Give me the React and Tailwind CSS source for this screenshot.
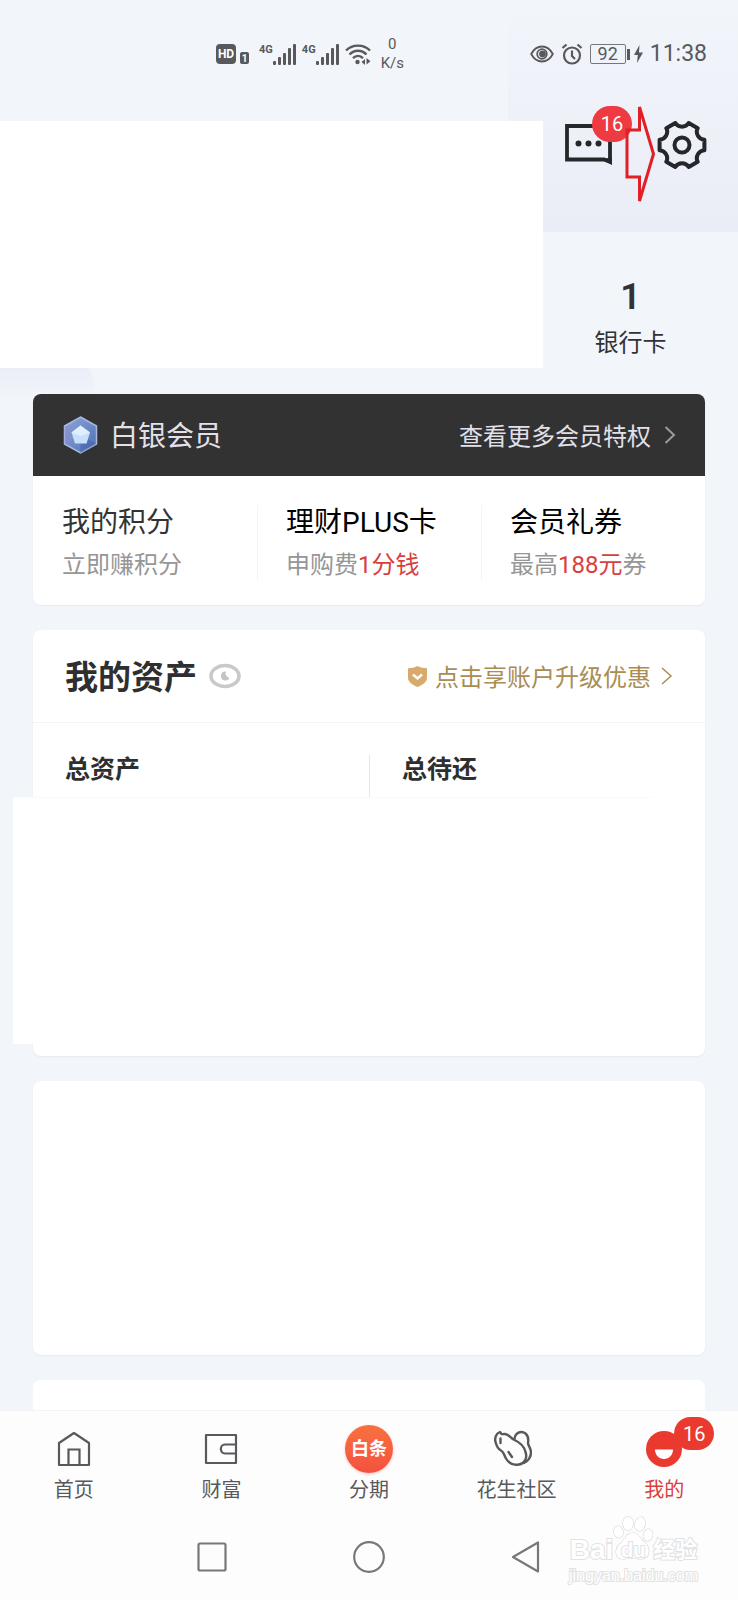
import React from 'react';

const benefits = [
  {
    id: 'points',
    title: '我的积分',
    titleClass: 'text-[#333]',
    note: <>立即赚积分</>,
    border: 'border-transparent'
  },
  {
    id: 'plus',
    title: '理财PLUS卡',
    titleClass: 'text-black',
    note: <>申购费<span className="text-[#d8403c]">1分钱</span></>,
    border: 'border-gray-100'
  },
  {
    id: 'coupon',
    title: '会员礼券',
    titleClass: 'text-black',
    note: <>最高<span className="text-[#d8403c]">188元</span>券</>,
    border: 'border-gray-100'
  }
];

const SignalBars = () => (
  <svg width="23" height="21" viewBox="0 0 23 21" fill="#58595c" aria-hidden="true">
    <rect x="0" y="17" width="3" height="4" rx="1" />
    <rect x="5" y="13" width="3" height="8" rx="1" />
    <rect x="10" y="9" width="3" height="12" rx="1" />
    <rect x="15" y="4" width="3" height="17" rx="1" />
    <rect x="20" y="0" width="3" height="21" rx="1" />
  </svg>
);

const Signal = () => (
  <div className="flex items-start">
    <span className="text-[11px] leading-3 font-bold">4G</span>
    <SignalBars />
  </div>
);

const StatusBar = () => (
  <div className="flex h-[108px] items-center justify-between pl-[29%] pr-[31px] text-[#58595c]">
    <div className="flex items-center gap-1.5 pl-0.5">
      <div className="mr-1 flex items-end gap-1">
        <span className="flex h-5 w-5 items-center justify-center rounded bg-[#58595c] text-xs font-bold text-white">HD</span>
        <span className="flex h-3 w-[9px] items-center justify-center rounded-xs bg-[#58595c] text-[10px] font-bold text-white">1</span>
      </div>
      <Signal />
      <Signal />
      <svg width="26" height="21" viewBox="0 0 26 21" fill="none" stroke="#58595c" strokeWidth="2.400" aria-hidden="true">
        <path d="M1 6.500C7.500 0 18.500 0 25 6.500" />
        <path d="M4.500 10.500C9.500 5.500 16.500 5.500 21.500 10.500" />
        <path d="M8 14.200C11 11.200 15 11.200 18 14.200" />
        <circle cx="12.500" cy="18" r="2.200" fill="#58595c" stroke="none" />
        <path d="M20 15v6l-3.500-3zM21.500 14v6.500l4-3.200z" fill="#58595c" stroke="none" />
      </svg>
      <div className="ml-1 flex flex-col items-center text-[15px] leading-[19px]">
        <span>0</span>
        <span>K/s</span>
      </div>
    </div>

    <div className="flex items-center gap-[7px]">
      <svg width="24" height="18" viewBox="0 0 24 18" fill="none" stroke="#58595c" strokeWidth="1.800" aria-hidden="true">
        <path d="M1.200 9C6.500-1 17.500-1 22.800 9C17.500 19 6.500 19 1.200 9Z" />
        <circle cx="12" cy="9" r="4.800" />
        <circle cx="12.500" cy="9" r="3.400" fill="#58595c" stroke="none" />
      </svg>
      <svg width="22" height="22" viewBox="0 0 22 22" fill="none" stroke="#58595c" strokeWidth="2.200" aria-hidden="true">
        <circle cx="11" cy="12.500" r="8" />
        <path d="M11 7.500V13l3 3" />
        <path d="M1.500 5L5.500 1.500M20.500 5L16.500 1.500" />
      </svg>
      <div className="flex items-center">
        <span className="flex h-5 w-9 items-center justify-center rounded-xs border border-[#77787b] text-lg leading-5">92</span>
        <span className="ml-px h-[11px] w-[3px] bg-[#58595c]" />
        <svg className="ml-1" width="9" height="18" viewBox="0 0 9 18" fill="#58595c" aria-hidden="true">
          <path d="M5.500 0L0 10h3.800L3 18L9 7.500H5z" />
        </svg>
      </div>
      <span className="text-[23px]">11:38</span>
    </div>
  </div>
);

const Header = () => (
  <header className="flex pt-[13px]">
    <div className="h-[247px] w-[543px] bg-white" />
    <div className="flex flex-1 flex-col">
      <div className="flex h-12 items-center justify-between pl-[22px] pr-[31px]">
        <button type="button" aria-label="消息" className="relative">
          <svg width="48" height="42" viewBox="0 0 48 42" fill="none" aria-hidden="true">
            <path d="M2 2H45V38L39 35.500H2Z" stroke="#26272b" strokeWidth="3.800" />
            <path d="M39 35L47 41V33Z" fill="#26272b" />
            <g fill="#26272b">
              <circle cx="13.500" cy="19.500" r="3" />
              <circle cx="23.500" cy="19.500" r="3" />
              <circle cx="33.500" cy="19.500" r="3" />
            </g>
          </svg>
          <span className="absolute -top-[18px] left-[27px] flex h-9 w-10 items-center justify-center rounded-full bg-[#ee3b41] text-xl text-white">16</span>
        </button>
        <button type="button" aria-label="设置" className="relative">
          <svg width="50" height="48" viewBox="0 0 50 48" fill="none" stroke="#26272b" strokeWidth="4" strokeLinejoin="round" aria-hidden="true">
            <path d="M47.400 29.200A8 8 0 0 0 40.700 40.800L31.700 46A8 8 0 0 0 18.300 46L9.300 40.800A8 8 0 0 0 2.600 29.200L2.600 18.800A8 8 0 0 0 9.300 7.200L18.300 2A8 8 0 0 0 31.700 2L40.700 7.200A8 8 0 0 0 47.400 18.800Z" />
            <circle cx="25" cy="24" r="7.500" />
          </svg>
          <svg className="absolute -top-4 -left-8" width="30" height="98" viewBox="0 0 30 98" fill="none" stroke="#e01f26" strokeWidth="3" aria-hidden="true">
            <path d="M2 25H14.500V2L28.500 49L14.500 96V72H2Z" />
          </svg>
        </button>
      </div>
      <a href="#cards" className="mt-[112px] mr-5 flex flex-col items-center gap-3.5 text-[#303236]">
        <span className="text-4xl leading-8 font-semibold">1</span>
        <span className="text-2xl leading-8">银行卡</span>
      </a>
    </div>
  </header>
);

const MemberCard = () => (
  <section className="rounded-lg bg-white shadow-xs">
    <div className="flex h-[82px] items-center justify-between rounded-t-lg bg-[#323232] pl-[30px] pr-7 text-[#e2e1ea]">
      <div className="flex items-center gap-3">
        <svg width="35" height="38" viewBox="0 0 35 38" aria-hidden="true">
          <defs>
            <linearGradient id="hex" x1="0" y1="0" x2="1" y2="1">
              <stop offset="0" stopColor="#8fa3d6" />
              <stop offset="0.500" stopColor="#6f8cc9" />
              <stop offset="1" stopColor="#4a6cae" />
            </linearGradient>
          </defs>
          <path d="M17.500 1L33.500 10V28L17.500 37L1.500 28V10Z" fill="url(#hex)" stroke="#a9b8e2" strokeWidth="1.500" />
          <path d="M1.500 10L17.500 19L1.500 28Z" fill="#8d8fc8" opacity="0.500" />
          <path d="M17.500 37V19L33.500 28Z" fill="#3f62a6" opacity="0.500" />
          <path d="M17.500 9.500L27 16.500L23.500 27.500H12L8.500 16.500Z" fill="#c6e0fb" />
          <path d="M17.500 9.500L27 16.500L17.500 20L8.500 16.500Z" fill="#e0effe" />
        </svg>
        <h2 className="pt-1 text-[28px] leading-9">白银会员</h2>
      </div>
      <a href="#privileges" className="flex items-center gap-3 text-2xl leading-8">
        <span className="pt-1">查看更多会员特权</span>
        <svg width="14" height="20" viewBox="0 0 14 20" fill="none" stroke="#9b9b9f" strokeWidth="2" aria-hidden="true">
          <path d="M2.500 2L11 10L2.500 18" />
        </svg>
      </a>
    </div>
    <div className="grid grid-cols-3 pt-[29px] pb-6">
      {benefits.map(item => (
        <a key={item.id} href={`#${item.id}`} className={`flex flex-col gap-2 border-l pl-7 ${item.border}`}>
          <span className={`text-[28px] leading-9 ${item.titleClass}`}>{item.title}</span>
          <span className="text-2xl leading-8 text-[#969696]">{item.note}</span>
        </a>
      ))}
    </div>
  </section>
);

const AssetsCard = () => (
  <section className="rounded-lg bg-white shadow-xs">
    <div className="flex h-[93px] items-center justify-between border-b border-gray-100 px-8">
      <div className="flex items-center gap-3">
        <h2 className="pt-1 text-[33px] leading-10 font-bold text-[#2f2f2f]">我的资产</h2>
        <button type="button" aria-label="隐藏金额">
          <svg width="32" height="26" viewBox="0 0 32 26" fill="none" aria-hidden="true">
            <ellipse cx="16" cy="13" rx="14" ry="10.500" stroke="#c9c9c9" strokeWidth="3.600" />
            <path d="M17 8.500A4.500 4.500 0 1 0 20.500 15A4.800 4.800 0 0 1 17 8.500Z" fill="#c4c4c4" />
          </svg>
        </button>
      </div>
      <a href="#upgrade" className="flex items-center gap-2 text-2xl leading-8 text-[#a98d54]">
        <svg width="19" height="21" viewBox="0 0 19 21" aria-hidden="true">
          <path d="M9.500 0C12.500 1.500 15.500 2.200 19 2.200V12C19 16 14.500 19 9.500 21C4.500 19 0 16 0 12V2.200C3.500 2.200 6.500 1.500 9.500 0Z" fill="#d8aa6c" />
          <path d="M5 8.500L9.500 12.500L14 8.500" fill="none" stroke="#fff" strokeWidth="2.400" />
        </svg>
        <span className="pt-1">点击享账户升级优惠</span>
        <svg width="14" height="18" viewBox="0 0 14 18" fill="none" stroke="#a98d54" strokeWidth="1.500" aria-hidden="true">
          <path d="M3 1L12 9L3 17" />
        </svg>
      </a>
    </div>
    <div className="grid grid-cols-2 pt-8 text-[25px] leading-[30px] font-bold text-[#2f2f2f]">
      <h3 className="h-[42px] pl-8">总资产</h3>
      <h3 className="h-[42px] border-l border-gray-200 pl-8">总待还</h3>
    </div>
    <div className="pb-3">
      <div className="-ml-5 mr-[52px] h-[247px] border-t border-gray-50 bg-white" />
    </div>
  </section>
);

const HomeIcon = () => (
  <svg width="34" height="36" viewBox="0 0 34 36" fill="none" stroke="#58595c" strokeWidth="2.200" aria-hidden="true">
    <path d="M2 12L17 2L32 12V34H2Z" strokeLinejoin="round" />
    <path d="M11.500 34V18.500H22.500V34" />
  </svg>
);

const WalletIcon = () => (
  <svg width="34" height="32" viewBox="0 0 34 32" fill="none" stroke="#58595c" strokeWidth="2.200" strokeLinejoin="round" aria-hidden="true">
    <path d="M2 2H32V30H2Z" />
    <path d="M32 11.500H21C15.500 11.500 15.500 20.500 21 20.500H32" />
  </svg>
);

const PeanutIcon = () => (
  <svg className="mr-2" width="38" height="38" viewBox="0 0 38 38" fill="none" stroke="#58595c" strokeWidth="2.400" strokeLinecap="round" strokeLinejoin="round" aria-hidden="true">
    <path d="M6 2C2 3.500 0.500 8 1.500 12C2.500 16 4 19 7 20.500C10 22 10 25 12 28.500C15 33.500 20 35.500 25 34.500C31 33.500 33.500 28 31.500 22C30 15.500 25 12 20.500 10C16 8 15.500 4.500 11 4C9 3.800 8.500 4.500 7.500 4Z" />
    <path d="M20.500 9C21 3 27 0 31.500 3.500C35 6.500 34.500 10 34 13C34 15.500 37 18 37 22.500C37 27 34 31.500 30 33" />
    <path d="M6.500 8.500V13M14.500 22L18 27" />
  </svg>
);

const MineIcon = () => (
  <svg width="36" height="36" viewBox="0 0 36 36" aria-hidden="true">
    <circle cx="18" cy="18" r="18" fill="#ea3a30" />
    <path d="M9 18.500H27C27 24 23 28 18 28C13 28 9 24 9 18.500Z" fill="#fff" />
  </svg>
);

const tabs = [
  { id: 'home', label: '首页', icon: <HomeIcon /> },
  { id: 'wealth', label: '财富', icon: <WalletIcon /> },
  {
    id: 'installment',
    label: '分期',
    icon: (
      <span className="flex h-12 w-12 items-center justify-center rounded-full bg-linear-to-b from-[#f8713f] to-[#f4503f] text-lg font-bold text-white shadow-sm shadow-red-200">白条</span>
    )
  },
  { id: 'community', label: '花生社区', icon: <PeanutIcon /> },
  { id: 'mine', label: '我的', icon: <MineIcon />, active: true, badge: 16 }
];

const TabBar = () => (
  <nav className="grid grid-cols-5 pt-3">
    {tabs.map(tab => (
      <a
        key={tab.id}
        href={`#${tab.id}`}
        className={`flex flex-col items-center text-xl leading-[30px] ${tab.active ? 'text-[#d8403c]' : 'text-[#58595c]'}`}
      >
        <span className="relative flex h-[52px] items-center">
          {tab.icon}
          {tab.badge && (
            <span className="absolute -top-1.5 left-7 flex h-[33px] w-10 items-center justify-center rounded-full bg-[#ea3a30] text-xl text-white">{tab.badge}</span>
          )}
        </span>
        {tab.label}
      </a>
    ))}
  </nav>
);

const Watermark = () => (
  <div className="absolute right-10 bottom-3 flex flex-col items-center font-['Liberation_Sans','Noto_Sans_CJK_SC',sans-serif] text-white [paint-order:stroke] [-webkit-text-stroke:2px_#e2e2e2]">
    <div className="flex items-end text-[28px] leading-7 font-bold">
      <span>Bai</span>
      <span className="relative flex w-10 justify-center">
        <svg className="absolute -top-5 left-0" width="40" height="46" viewBox="0 0 40 46" fill="#fff" stroke="#d8d8d8" strokeWidth="1.200" aria-hidden="true">
          <ellipse cx="15" cy="7.500" rx="5" ry="7" />
          <ellipse cx="27" cy="8" rx="5" ry="7" transform="rotate(12 27 8)" />
          <ellipse cx="5.500" cy="16" rx="4.500" ry="6" transform="rotate(-12 5.500 16)" />
          <ellipse cx="35" cy="19" rx="4.500" ry="6" transform="rotate(12 35 19)" />
          <path d="M20 17C26 17 27 23 32 27C38 32 37 43 28 43C24 43 23 42 19 42C15 42 14 43 10 43C2 43 1 33 7 28C12 24 13 17 20 17Z" />
        </svg>
        <span className="relative text-xl leading-7">du</span>
      </span>
      <span className="text-[22px]">经验</span>
    </div>
    <span className="text-base leading-6">jingyan.baidu.com</span>
  </div>
);

const SystemNav = () => (
  <div className="relative pt-9 pb-[27px]">
    <div className="mx-auto grid w-[64%] grid-cols-3 justify-items-center">
      <button type="button" aria-label="最近任务">
        <svg width="32" height="32" viewBox="0 0 32 32" fill="none" stroke="#77787a" strokeWidth="2.200" aria-hidden="true">
          <rect x="2.500" y="2.500" width="27" height="27" rx="1.500" />
        </svg>
      </button>
      <button type="button" aria-label="主屏幕">
        <svg width="32" height="32" viewBox="0 0 32 32" fill="none" stroke="#77787a" strokeWidth="2.200" aria-hidden="true">
          <circle cx="16" cy="16" r="14.800" />
        </svg>
      </button>
      <button type="button" aria-label="返回">
        <svg width="32" height="32" viewBox="0 0 32 32" fill="none" stroke="#77787a" strokeWidth="2.200" strokeLinejoin="round" aria-hidden="true">
          <path d="M28 1.500V30.500L3 16Z" />
        </svg>
      </button>
    </div>
    <Watermark />
  </div>
);

const App = () => {
  return (
    <div className="relative flex min-h-screen flex-col overflow-hidden bg-[#f2f5fa] font-['Roboto','Noto_Sans_CJK_SC',sans-serif]">
      {/* Soft background tints */}
      <div className="absolute top-0 right-0 h-[232px] w-[230px] bg-linear-to-b from-[#f2f5fa] to-[#eaedf6]" />
      <div className="absolute top-[360px] left-0 h-10 w-[94px] rounded-tr-3xl bg-linear-to-b from-[#e9ecf7] to-[#f2f5fa]" />

      <div className="relative flex flex-1 flex-col">
        <StatusBar />
        <Header />

        <main className="flex flex-1 flex-col gap-[25px] px-[33px] pt-[26px]">
          <MemberCard />
          <AssetsCard />
          <section className="h-[274px] rounded-lg bg-white shadow-xs" />
          <section className="min-h-7 flex-1 rounded-t-lg bg-white" />
        </main>

        <footer className="border-t border-gray-100 bg-[#fdfdfd]">
          <TabBar />
          <SystemNav />
        </footer>
      </div>
    </div>
  );
};

export default App;
